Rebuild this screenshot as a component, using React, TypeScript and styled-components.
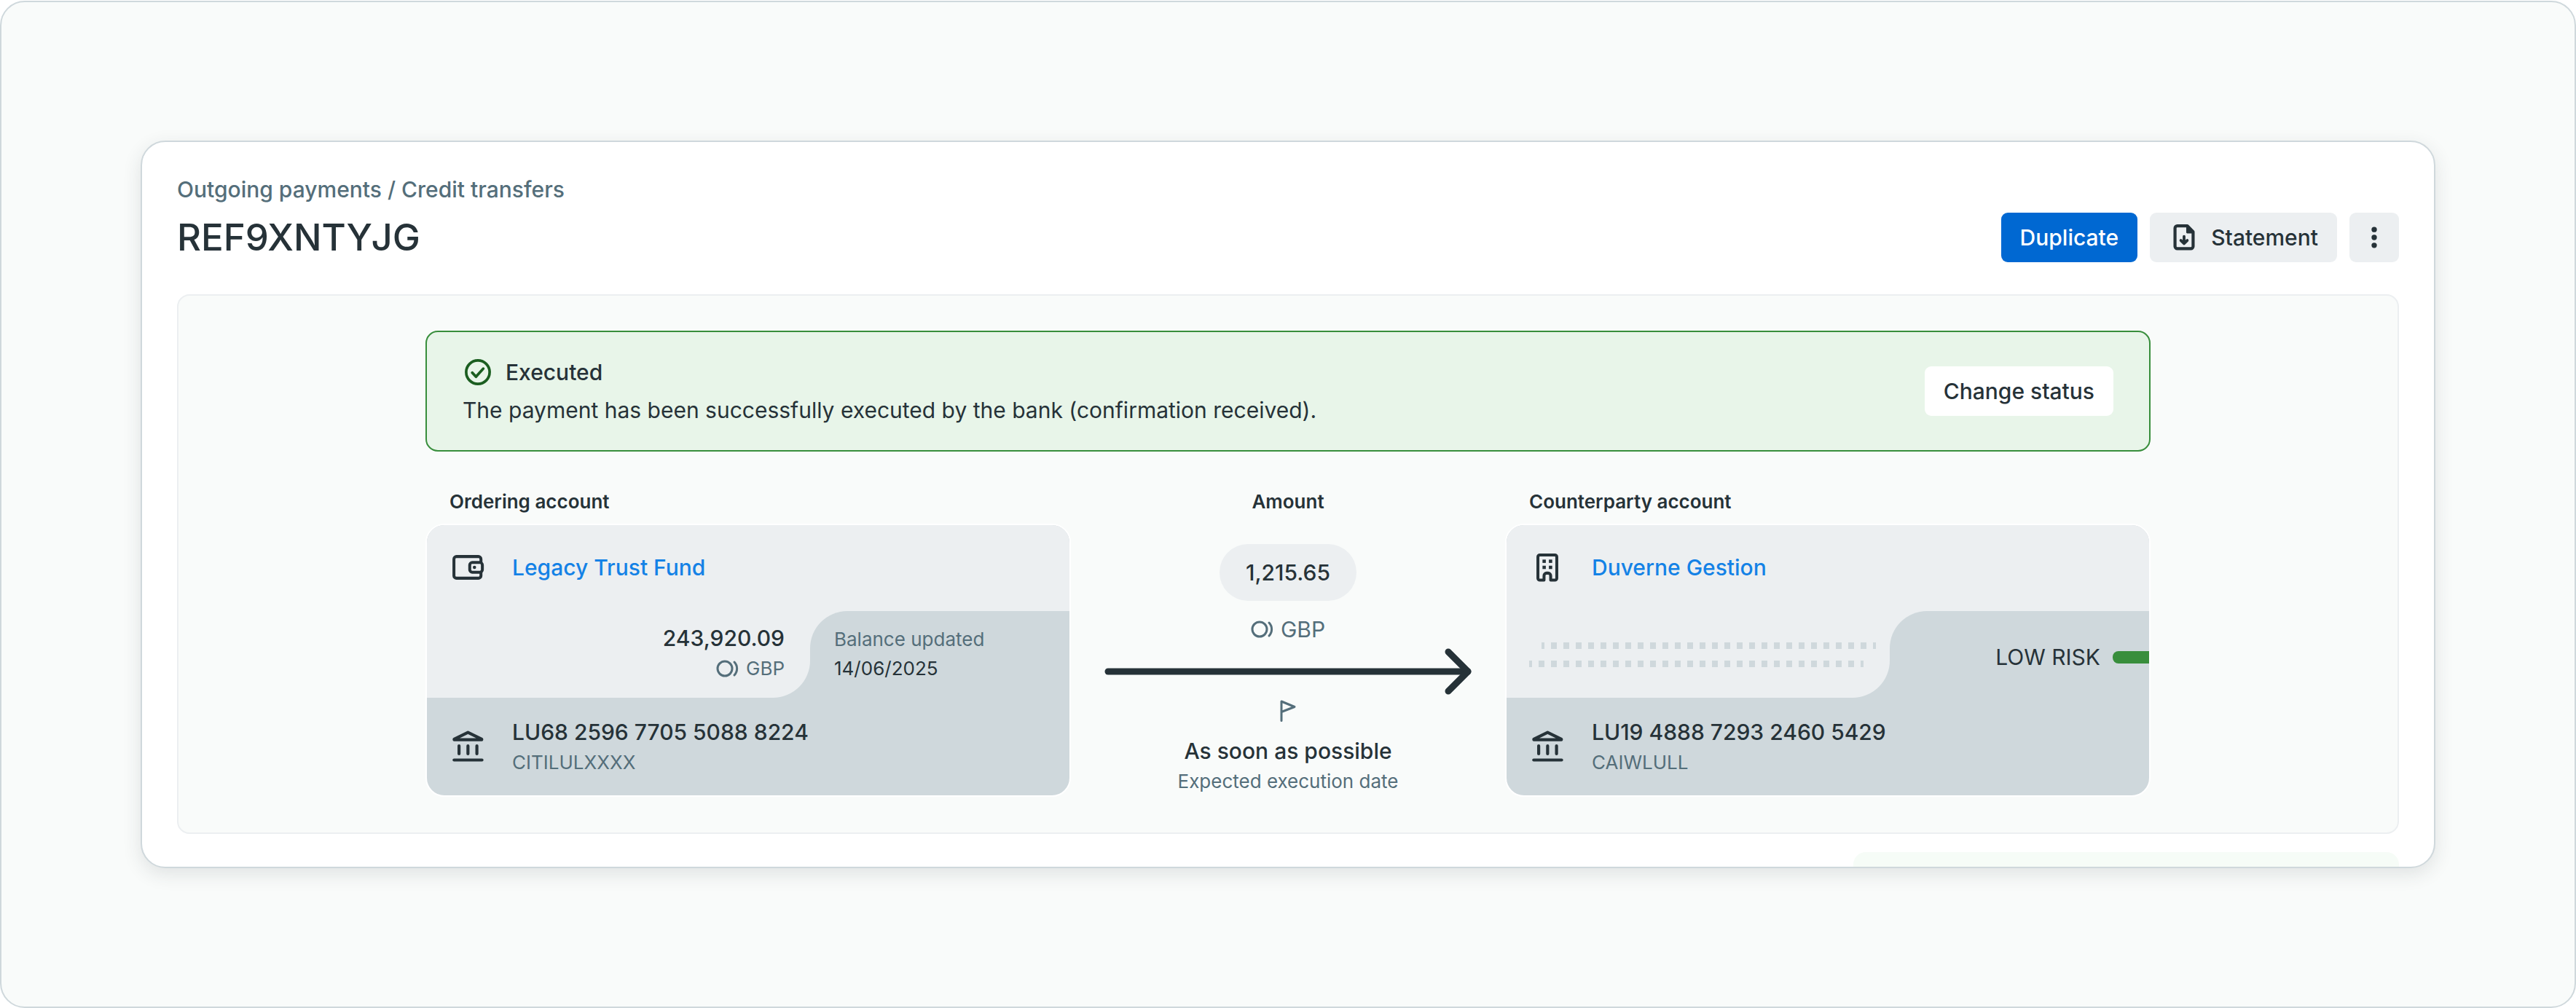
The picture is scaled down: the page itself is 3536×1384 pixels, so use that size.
import React from 'react';
import styled, { createGlobalStyle } from 'styled-components';

const color = {
  text: '#263238',
  muted: '#546e7a',
  link: '#1482e6',
  primary: '#0068d2',
  surface: '#f9fbfa',
  soft: '#eceff1',
  tint: '#cfd8dc',
  success: '#388e3c',
  successDark: '#1b5e20',
  successSoft: '#e8f5e9',
};

const GlobalStyle = createGlobalStyle`
  *, *::before, *::after { box-sizing: border-box; }
  body {
    margin: 0;
    padding: 1px 0;
    background: #fff;
    color: ${color.text};
    font-family: Inter, "Liberation Sans", sans-serif;
    font-size: 30px;
    line-height: 42px;
  }
  h1, h2, p { margin: 0; font: inherit; }
  button { font: inherit; color: inherit; border: 0; cursor: pointer; }
`;

const Frame = styled.div`
  min-height: calc(100vh - 2px);
  padding: 190px 191px;
  border: 2px solid ${color.tint};
  border-radius: 34px;
  background: ${color.surface};
`;

const Window = styled.main`
  overflow: hidden;
  padding: 44px 48px 0;
  border: 2px solid ${color.tint};
  border-radius: 34px;
  background: #fff;
  box-shadow: 0 8px 26px rgba(38, 50, 56, 0.12);
`;

const Breadcrumb = styled.nav`
  color: ${color.muted};
  font-weight: 500;
  margin-bottom: 11px;
`;

const Crumb = styled.a`
  color: inherit;
  text-decoration: none;
`;

const TitleRow = styled.header`
  display: flex;
  align-items: center;
  justify-content: space-between;
  margin-bottom: 44px;
`;

const Title = styled.h1`
  font-size: 51px;
  font-weight: 500;
  line-height: 68px;
`;

const Actions = styled.div`
  display: flex;
  gap: 17px;
`;

type Tone = 'primary' | 'soft' | 'plain';

const tones: Record<Tone, string> = {
  primary: `background: ${color.primary}; color: #fff;`,
  soft: `background: ${color.soft};`,
  plain: `background: #fff;`,
};

const Button = styled.button<{ $tone: Tone; $square?: boolean }>`
  display: flex;
  flex-shrink: 0;
  align-items: center;
  justify-content: center;
  gap: 16px;
  height: 68px;
  min-width: 68px;
  padding: ${(p) => (p.$square ? '0' : '0 26px')};
  border-radius: 9px;
  font-weight: 500;
  ${(p) => tones[p.$tone]}
`;

const Panel = styled.section`
  padding: 48px 48px 49px;
  border: 2px solid ${color.soft};
  border-radius: 17px;
  background: ${color.surface};
`;

const PanelInner = styled.div`
  max-width: 2368px;
  margin: 0 auto;
`;

const Alert = styled.div`
  display: flex;
  align-items: center;
  justify-content: space-between;
  padding: 34px 49px;
  margin-bottom: 51px;
  border: 2px solid ${color.success};
  border-radius: 17px;
  background: ${color.successSoft};
`;

const AlertText = styled.div`
  display: grid;
  gap: 10px;
`;

const AlertTitle = styled.p`
  display: flex;
  align-items: center;
  gap: 17px;
  font-weight: 500;
`;

const Transfer = styled.div`
  display: grid;
  grid-template-columns: 886fr 596fr 886fr;
`;

const Column = styled.section`
  display: flex;
  flex-direction: column;
`;

const ColumnTitle = styled.h2<{ $center?: boolean }>`
  margin-bottom: 12px;
  padding: 0 33px;
  font-size: 26px;
  font-weight: 600;
  line-height: 36px;
  text-align: ${(p) => (p.$center ? 'center' : 'left')};
`;

const AccountCard = styled.article`
  overflow: hidden;
  border: 2px solid #fff;
  border-radius: 26px;
  background: ${color.tint};
`;

const OwnerRow = styled.div`
  display: flex;
  align-items: center;
  gap: 40px;
  padding: 37px 35px 39px;
  background: ${color.soft};
`;

const OwnerLink = styled.a`
  color: ${color.link};
  font-weight: 500;
  text-decoration: none;
`;

const Split = styled.div`
  display: grid;
  grid-template-columns: 526px 1fr;
  height: 119px;
`;

const SplitLeft = styled.div`
  background: ${color.tint};
`;

const SplitRight = styled.div`
  background: ${color.soft};
`;

const LightTab = styled.div`
  display: flex;
  flex-direction: column;
  align-items: flex-end;
  height: 100%;
  padding: 16px 35px 0;
  border-bottom-right-radius: 51px;
  background: ${color.soft};
`;

const SkeletonTab = styled(LightTab)`
  align-items: flex-start;
  justify-content: center;
  gap: 16px;
  padding: 0 31px;
`;

const DarkTab = styled.div`
  display: flex;
  flex-direction: column;
  height: 100%;
  padding: 19px 33px 0;
  border-top-left-radius: 51px;
  background: ${color.tint};
  line-height: 40px;
`;

const RiskTab = styled(DarkTab)`
  flex-direction: row;
  align-items: center;
  justify-content: flex-end;
  gap: 17px;
  padding: 7px 0 0;
`;

const RiskBar = styled.span`
  width: 50px;
  height: 17px;
  border-radius: 8px 0 0 8px;
  background: ${color.success};
`;

const SkeletonLine = styled.span<{ $shifted?: boolean }>`
  width: 459px;
  height: 9px;
  margin-left: ${(p) => (p.$shifted ? '17px' : '0')};
  background: repeating-linear-gradient(
    90deg,
    ${color.tint} 0 4px,
    transparent 4px 13px,
    ${color.tint} 13px 17px
  );
`;

const Strong = styled.p`
  font-weight: 500;
`;

const Small = styled.p<{ $muted?: boolean }>`
  font-size: 26px;
  color: ${(p) => (p.$muted ? color.muted : 'inherit')};
`;

const Currency = styled.p<{ $size: number }>`
  display: flex;
  align-items: center;
  gap: 9px;
  color: ${color.muted};
  font-size: ${(p) => p.$size}px;
`;

const BankRow = styled.div`
  display: flex;
  align-items: center;
  gap: 40px;
  padding: 26px 35px 24px;
`;

const AmountColumn = styled(Column)`
  align-items: center;
`;

const AmountPill = styled.p`
  margin: 28px 0 18px;
  padding: 18px 36px;
  border-radius: 39px;
  background: ${color.soft};
  font-weight: 500;
`;

const ArrowWrap = styled.div`
  align-self: stretch;
  height: 64px;
  margin: 6px 46px 4px;
`;

const FlagWrap = styled.div`
  height: 34px;
  margin-bottom: 17px;
`;

const NextSection = styled.section`
  width: 749px;
  height: 20px;
  margin: 25px 0 0 auto;
  border-radius: 17px 17px 0 0;
  background: #f6fcf7;
`;

const Svg = styled.svg`
  display: block;
  flex-shrink: 0;
  overflow: visible;
  fill: none;
  stroke: currentColor;
  stroke-linecap: round;
  stroke-linejoin: round;
`;

const CheckCircleIcon = () => (
  <Svg width="42" height="42" viewBox="0 0 24 24" strokeWidth="2.1" color={color.successDark}>
    <circle cx="12" cy="12" r="9.200" />
    <path d="M7.600 12.400l2.900 3.200 5.700-6.400" />
  </Svg>
);

const FileDownIcon = () => (
  <Svg width="42" height="42" viewBox="0 0 24 24" strokeWidth="2.4">
    <path d="M14.500 2.900H6.700a1.800 1.800 0 0 0-1.800 1.800v14.300a1.800 1.800 0 0 0 1.800 1.800h10.600a1.800 1.800 0 0 0 1.800-1.800V7.600z" />
    <path d="M14.500 3.200v4.800h4.600z" fill="currentColor" strokeWidth="1.600" />
    <path d="M12 11.300v5M9.500 14.300l2.500 2.500 2.500-2.500" strokeWidth="2.200" />
  </Svg>
);

const MoreIcon = () => (
  <Svg width="42" height="42" viewBox="0 0 24 24" strokeWidth="0">
    <g fill="currentColor">
      <circle cx="12" cy="5.800" r="2.100" />
      <circle cx="12" cy="12" r="2.100" />
      <circle cx="12" cy="18.200" r="2.100" />
    </g>
  </Svg>
);

const WalletIcon = () => (
  <Svg width="42" height="42" viewBox="0 0 24 24" strokeWidth="2.3">
    <path d="M22.400 8V5.500a2 2 0 0 0-2-2H3.200a2 2 0 0 0-2 2v13a2 2 0 0 0 2 2h17.200a2 2 0 0 0 2-2V16" />
    <rect x="13.600" y="8.200" width="9.900" height="7.600" rx="2" />
    <circle cx="17.300" cy="12" r="1.300" fill="currentColor" stroke="none" />
  </Svg>
);

const BuildingIcon = () => (
  <Svg width="42" height="42" viewBox="0 0 24 24" strokeWidth="2.3">
    <path d="M4.600 20.500V3.800a1.500 1.500 0 0 1 1.500-1.500h11.800a1.500 1.500 0 0 1 1.500 1.500v16.700a1.500 1.500 0 0 1-1.500 1.500h-3.300v-3.500a2 2 0 0 0-2-2h-1.200a2 2 0 0 0-2 2v3.500H6.100a1.500 1.500 0 0 1-1.500-1.500z" />
    <g fill="currentColor" stroke="none">
      <rect x="8.200" y="5.900" width="2.600" height="2.600" />
      <rect x="13.200" y="5.900" width="2.600" height="2.600" />
      <rect x="8.200" y="10.700" width="2.600" height="2.600" />
      <rect x="13.200" y="10.700" width="2.600" height="2.600" />
    </g>
  </Svg>
);

const BankIcon = () => (
  <Svg width="42" height="42" viewBox="0 0 24 24" strokeWidth="2.400">
    <path d="M12.200 .4L23 5.700v.4H1.400v-.4z" />
    <path d="M5.200 10.900v6.200M12.200 10.900v6.200M19.200 10.900v6.200M1.300 22h21.900" />
  </Svg>
);

const CoinsIcon = () => (
  <Svg width="32" height="24" viewBox="0 0 32 24" strokeWidth="3">
    <circle cx="12" cy="12" r="10" />
    <path d="M25 3a13 13 0 0 1 0 18" />
  </Svg>
);

const FlagIcon = () => (
  <Svg width="34" height="34" viewBox="0 0 34 34" strokeWidth="3" color={color.muted}>
    <path d="M8 30.500V4l18 7.500-18 7" />
  </Svg>
);

const ArrowIcon = () => (
  <Svg width="100%" height="64" strokeWidth="9">
    <line x1="5" y1="31" x2="99%" y2="31" />
    <svg x="100%" overflow="visible">
      <path d="M-32 4L-5 31L-32 58" />
    </svg>
  </Svg>
);

type AccountProps = {
  title: string;
  icon: React.ReactNode;
  owner: string;
  left: React.ReactNode;
  right: React.ReactNode;
  iban: string;
  bic: string;
};

const Account = ({ title, icon, owner, left, right, iban, bic }: AccountProps) => (
  <Column>
    <ColumnTitle>{title}</ColumnTitle>
    <AccountCard>
      <OwnerRow>
        {icon}
        <OwnerLink href="#">{owner}</OwnerLink>
      </OwnerRow>
      <Split>
        <SplitLeft>{left}</SplitLeft>
        <SplitRight>{right}</SplitRight>
      </Split>
      <BankRow>
        <BankIcon />
        <div>
          <Strong>{iban}</Strong>
          <Small $muted>{bic}</Small>
        </div>
      </BankRow>
    </AccountCard>
  </Column>
);

export default function App() {
  return (
    <>
      <GlobalStyle />
      <Frame>
        <Window>
          <Breadcrumb>
            <Crumb href="#">Outgoing payments</Crumb> / <Crumb href="#">Credit transfers</Crumb>
          </Breadcrumb>
          <TitleRow>
            <Title>REF9XNTYJG</Title>
            <Actions>
              <Button type="button" $tone="primary">Duplicate</Button>
              <Button type="button" $tone="soft">
                <FileDownIcon />
                Statement
              </Button>
              <Button type="button" $tone="soft" $square aria-label="More actions">
                <MoreIcon />
              </Button>
            </Actions>
          </TitleRow>
          <Panel>
            <PanelInner>
              <Alert role="status">
                <AlertText>
                  <AlertTitle>
                    <CheckCircleIcon />
                    Executed
                  </AlertTitle>
                  <p>The payment has been successfully executed by the bank (confirmation received).</p>
                </AlertText>
                <Button type="button" $tone="plain">Change status</Button>
              </Alert>
              <Transfer>
                <Account
                  title="Ordering account"
                  icon={<WalletIcon />}
                  owner="Legacy Trust Fund"
                  left={
                    <LightTab>
                      <Strong>243,920.09</Strong>
                      <Currency $size={26}>
                        <CoinsIcon />
                        GBP
                      </Currency>
                    </LightTab>
                  }
                  right={
                    <DarkTab>
                      <Small $muted>Balance updated</Small>
                      <Small>14/06/2025</Small>
                    </DarkTab>
                  }
                  iban="LU68 2596 7705 5088 8224"
                  bic="CITILULXXXX"
                />
                <AmountColumn>
                  <ColumnTitle $center>Amount</ColumnTitle>
                  <AmountPill>1,215.65</AmountPill>
                  <Currency $size={30}>
                    <CoinsIcon />
                    GBP
                  </Currency>
                  <ArrowWrap>
                    <ArrowIcon />
                  </ArrowWrap>
                  <FlagWrap>
                    <FlagIcon />
                  </FlagWrap>
                  <Strong>As soon as possible</Strong>
                  <Small $muted>Expected execution date</Small>
                </AmountColumn>
                <Account
                  title="Counterparty account"
                  icon={<BuildingIcon />}
                  owner="Duverne Gestion"
                  left={
                    <SkeletonTab>
                      <SkeletonLine $shifted />
                      <SkeletonLine />
                    </SkeletonTab>
                  }
                  right={
                    <RiskTab>
                      LOW RISK
                      <RiskBar />
                    </RiskTab>
                  }
                  iban="LU19 4888 7293 2460 5429"
                  bic="CAIWLULL"
                />
              </Transfer>
            </PanelInner>
          </Panel>
          <NextSection />
        </Window>
      </Frame>
    </>
  );
}
